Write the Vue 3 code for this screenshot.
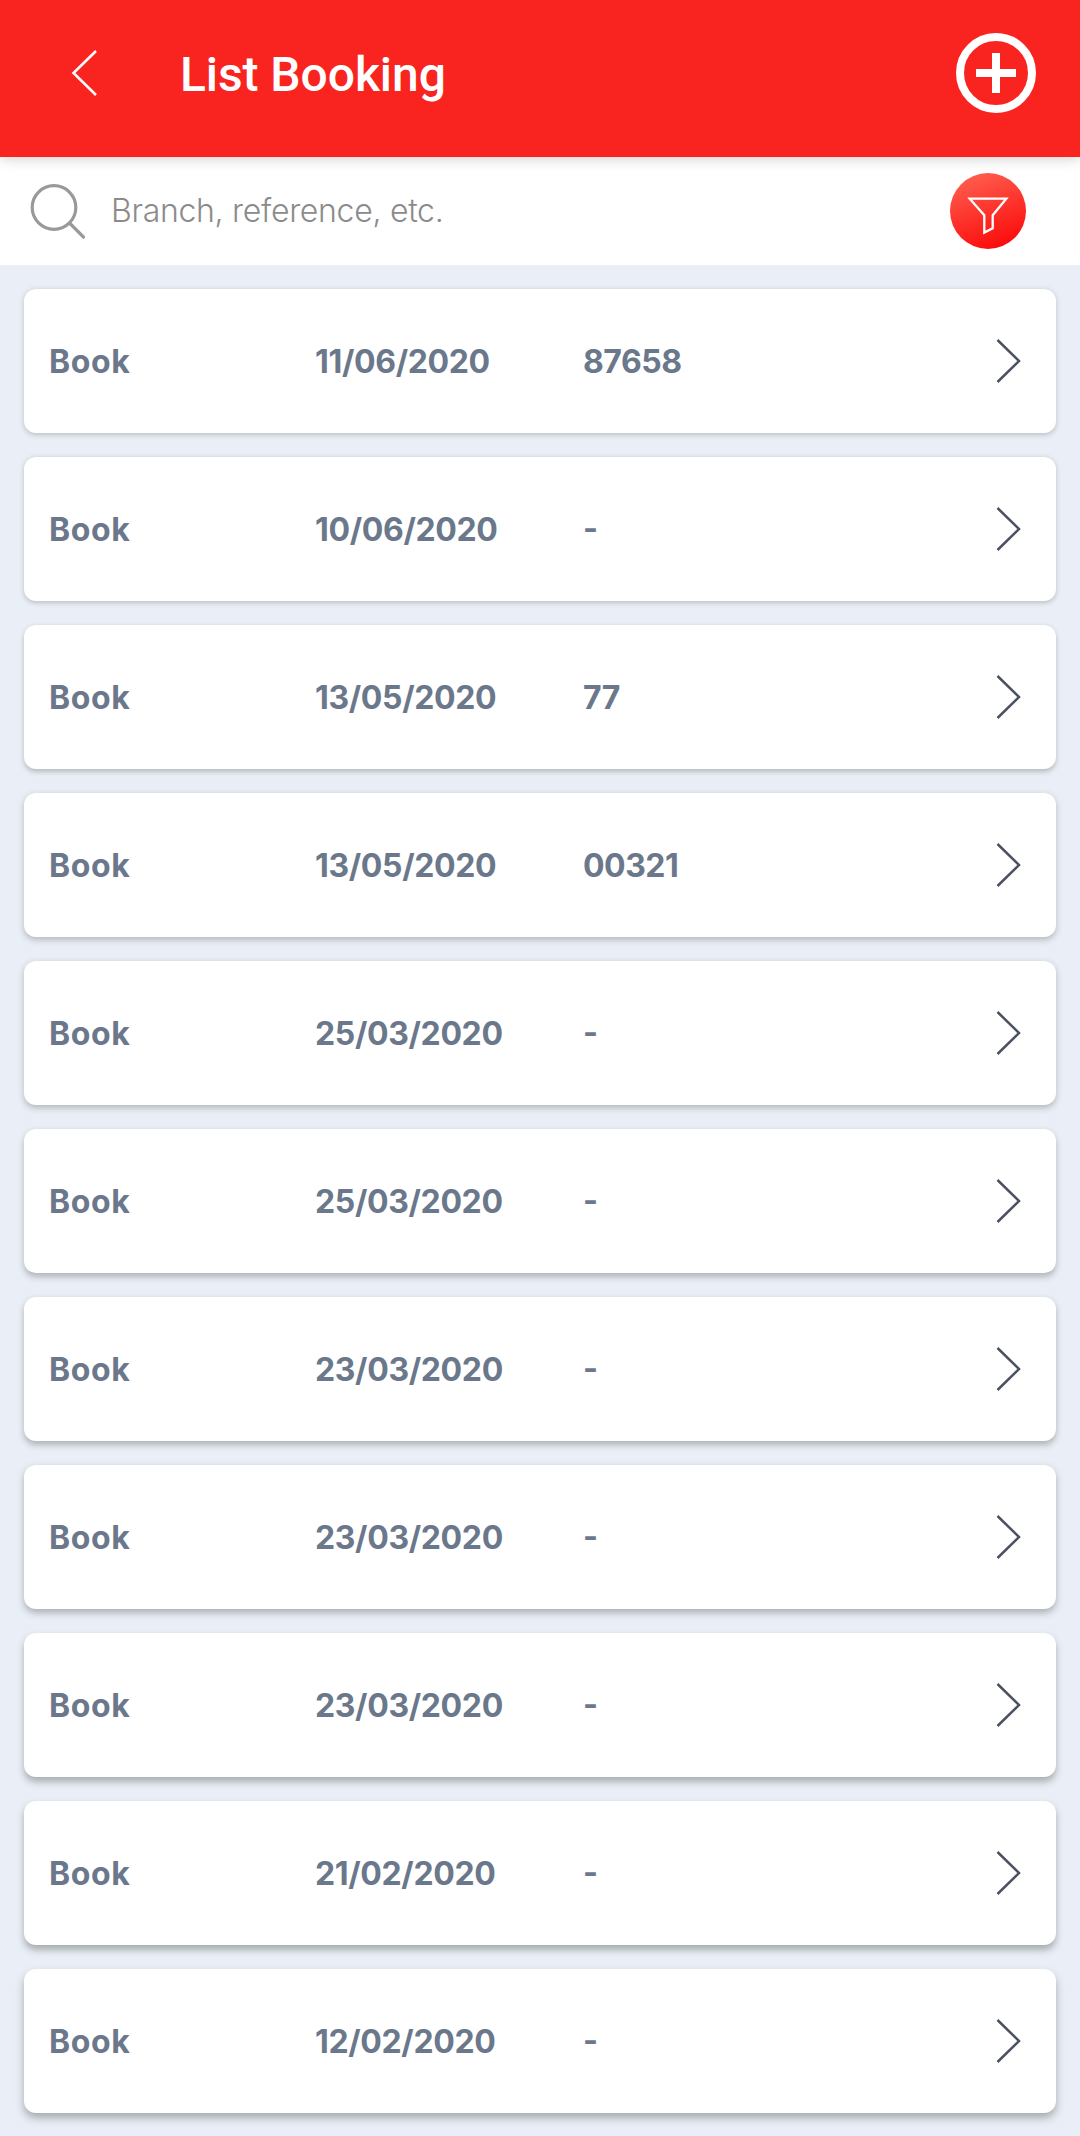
<script setup>
const bookings = [
  { date: '11/06/2020', reference: '87658' },
  { date: '10/06/2020', reference: '-' },
  { date: '13/05/2020', reference: '77' },
  { date: '13/05/2020', reference: '00321' },
  { date: '25/03/2020', reference: '-' },
  { date: '25/03/2020', reference: '-' },
  { date: '23/03/2020', reference: '-' },
  { date: '23/03/2020', reference: '-' },
  { date: '23/03/2020', reference: '-' },
  { date: '21/02/2020', reference: '-' },
  { date: '12/02/2020', reference: '-' },
]

// Cards lower on the screen cast a deeper shadow.
const shadow = (i) => ({
  boxShadow: `0 ${(1.5 + i * 0.35).toFixed(2)}px ${(5 + i * 0.3).toFixed(2)}px rgba(50, 60, 50, ${(0.25 + i * 0.013).toFixed(3)})`,
})
</script>

<template>
  <div class="screen">
    <header class="header">
      <svg class="back" width="28" height="50" viewBox="0 0 28 50">
        <path d="M26 3 L3.5 25 L26 47" />
      </svg>
      <h1 class="title">List Booking</h1>
      <svg class="add" width="80" height="80" viewBox="0 0 80 80">
        <circle cx="40" cy="40" r="36" />
        <path d="M40 20V60M20 40H60" />
      </svg>
    </header>

    <div class="search">
      <svg class="glass" width="56" height="58" viewBox="0 0 56 58">
        <circle cx="25" cy="25.5" r="21.8" />
        <path d="M40.5 41 L55.5 56" />
      </svg>
      <span class="placeholder">Branch, reference, etc.</span>
      <div class="filter">
        <svg width="76" height="76" viewBox="0 0 76 76">
          <path d="M19.7 25.7 H56.3 L42.7 42.2 V55.2 L34.3 59.5 V42.2 Z" />
        </svg>
      </div>
    </div>

    <main class="list">
      <article v-for="(b, i) in bookings" :key="i" class="card" :style="shadow(i)">
        <span class="name">Book</span>
        <span class="date">{{ b.date }}</span>
        <span class="reference" :class="{ empty: b.reference === '-' }">{{ b.reference }}</span>
        <svg class="chevron" width="28" height="48" viewBox="0 0 28 48">
          <path d="M3.5 3 L25 24 L3.5 45" />
        </svg>
      </article>
    </main>
  </div>
</template>

<style>
body {
  background: #eaeff7;
}
</style>

<style scoped>
.screen {
  width: 1080px;
  height: 2136px;
  overflow: hidden;
  background: #eaeff7;
  font-family: Inter, 'Open Sans', sans-serif;
}
.header {
  position: relative;
  display: flex;
  align-items: center;
  box-sizing: border-box;
  height: 157px;
  padding: 0 44px 11px 70px;
  background: #f92420;
  box-shadow: 0 2px 12px rgba(0, 0, 0, 0.18);
}
.title {
  margin: 4px 0 0 82px;
  color: #fff;
  font: 500 48px/60px Roboto, sans-serif;
  letter-spacing: -0.08px;
}
.add {
  margin-left: auto;
}
svg {
  display: block;
  flex: none;
  fill: none;
}
.back {
  stroke: #fff;
  stroke-width: 2.6;
}
.add {
  stroke: #fff;
  stroke-width: 8;
}
.search {
  display: flex;
  align-items: center;
  box-sizing: border-box;
  height: 108px;
  padding: 0 54px 0 28px;
  background: #fff;
}
.glass {
  margin: -1px 0 0 1px;
  stroke: #999;
  stroke-width: 3.2;
}
.placeholder {
  margin: 0 0 0 26px;
  color: #8b8b8b;
  font-size: 32px;
  font-weight: 350;
  line-height: 44px;
  letter-spacing: -0.3px;
}
.filter {
  width: 76px;
  height: 76px;
  margin-left: auto;
  border-radius: 50%;
  background: linear-gradient(160deg, #ff5a4b 12%, #fb0d0d 88%);
}
.filter svg {
  stroke: #fff;
  stroke-width: 2.3;
}
.list {
  display: flex;
  flex-direction: column;
  gap: 24px;
  padding: 24px;
}
.card {
  display: grid;
  grid-template-columns: 267px 268px 1fr 28px;
  align-items: center;
  box-sizing: border-box;
  height: 144px;
  padding: 0 34px 0 24px;
  border-radius: 12px;
  background: #fff;
  color: #6b788b;
  font-size: 32px;
  font-weight: 700;
  line-height: 40px;
}
.name,
.date,
.reference {
  padding-top: 2px;
}
.name {
  padding-left: 1px;
  letter-spacing: 0.6px;
}
.date {
  letter-spacing: -0.35px;
}
.reference {
  letter-spacing: -0.5px;
}
.reference.empty {
  padding-top: 0;
}
.chevron {
  stroke: #4b5260;
  stroke-width: 2.5;
}
</style>
